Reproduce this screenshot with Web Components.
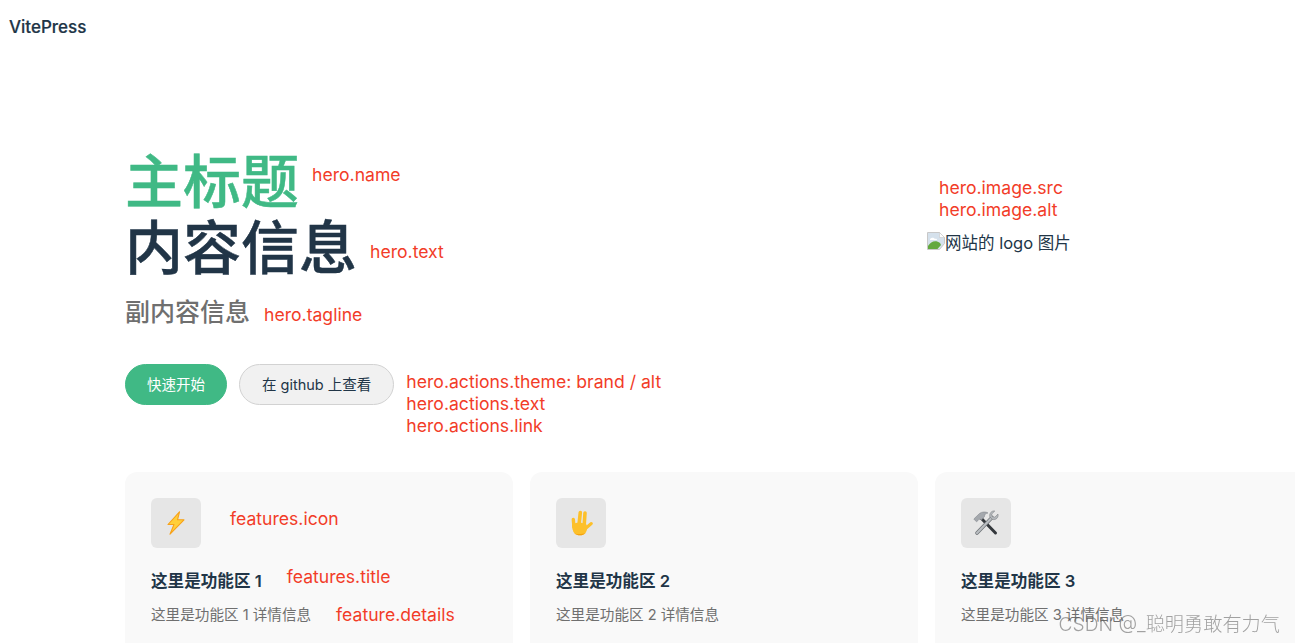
<!DOCTYPE html>
<html lang="zh">
<head>
<meta charset="utf-8">
<title>VitePress</title>
<style>
  html, body { margin: 0; height: 100%; overflow: hidden; background: #fff; }
  body {
    font-family: Inter, "Noto Sans CJK SC", sans-serif;
    color: #213547;
  }
</style>
</head>
<body>
<vp-nav>VitePress</vp-nav>
<vp-hero>
  <vp-title-row slot="name" tone="brand">主标题<vp-note slot="note">hero.name</vp-note></vp-title-row>
  <vp-title-row slot="text" tone="dark">内容信息<vp-note slot="note">hero.text</vp-note></vp-title-row>
  <span slot="tagline">副内容信息</span>
  <vp-note slot="tagline-note">hero.tagline</vp-note>
  <vp-button theme="brand" slot="actions">快速开始</vp-button>
  <vp-button theme="alt" slot="actions">在 github 上查看</vp-button>
  <vp-note slot="action-notes">hero.actions.theme: brand / alt</vp-note>
  <vp-note slot="action-notes">hero.actions.text</vp-note>
  <vp-note slot="action-notes">hero.actions.link</vp-note>
  <vp-note slot="image-notes">hero.image.src</vp-note>
  <vp-note slot="image-notes">hero.image.alt</vp-note>
  <vp-broken-image slot="image">网站的 logo 图片</vp-broken-image>
</vp-hero>
<vp-features>
  <vp-feature>
    <svg slot="icon" width="18" height="24" viewBox="0 0 18 24">
      <path d="M12.500.8 1 13.500h6L3 23.200 17 8.800h-6.500z" fill="#ffcf3a" stroke="#f7a11a" stroke-width="1.100" stroke-linejoin="round"/>
    </svg>
    <vp-note slot="icon-note">features.icon</vp-note>
    <span slot="title">这里是功能区 1</span>
    <vp-note slot="title-note">features.title</vp-note>
    <span slot="details">这里是功能区 1 详情信息</span>
    <vp-note slot="details-note">feature.details</vp-note>
  </vp-feature>
  <vp-feature>
    <svg slot="icon" width="24" height="26" viewBox="0 0 24 26">
      <g fill="none" stroke="#fdc02a" stroke-linecap="round">
        <path d="M5 17 4.300 9.500" stroke-width="3.400"/>
        <path d="M10 15 11.300 2.500" stroke-width="3.600"/>
        <path d="M15.200 15 16 3" stroke-width="3.600"/>
        <path d="M16.500 18.500 22.300 13.500" stroke-width="3"/>
      </g>
      <path d="M3 14.500C6 12 14 12 17.500 14.500 18.500 17 18.500 20 16.500 23 14 26 8.500 26 5.500 23.500 3.800 21.500 3 18 3 14.500Z" fill="#fdc02a"/>
      <path d="M5.500 23.500C8.500 26 14 26 16.500 23 14 24 9 24.500 5.500 23.500Z" fill="#f5a20f"/>
    </svg>
    <span slot="title">这里是功能区 2</span>
    <span slot="details">这里是功能区 2 详情信息</span>
  </vp-feature>
  <vp-feature>
    <svg slot="icon" width="26" height="26" viewBox="0 0 26 26">
      <path d="M7.500 7.500 22.500 23" stroke="#34383c" stroke-width="3" stroke-linecap="round"/>
      <path d="M.8 9 6.500 3.500C9 1.500 13 1.500 15 3 12.500 3.300 11.500 4.500 11.500 6.500L8.500 10C7.200 9 6 9 5 10.500L3.500 11.800Z" fill="#a4a8ad" stroke="#7b7f84" stroke-width=".5"/>
      <path d="M19 7.500 4 23" stroke="#6d7175" stroke-width="3.600" stroke-linecap="round"/>
      <path d="M19 7.500 4 23" stroke="#b9bdc1" stroke-width="2.200" stroke-linecap="round"/>
      <path d="M25 4 21.800 7.200 19.300 6.600 18.700 4.100 21.800 1C19 .4 16 3 16.800 6.800L19.500 9.500C23 10.300 25.800 7.500 25 4Z" fill="#b3b7bb" stroke="#74787c" stroke-width=".5"/>
    </svg>
    <span slot="title">这里是功能区 3</span>
    <span slot="details">这里是功能区 3 详情信息</span>
  </vp-feature>
</vp-features>
<vp-watermark>CSDN @_聪明勇敢有力气</vp-watermark>

<script>
class VpNav extends HTMLElement {
  constructor() {
    super();
    this.attachShadow({ mode: "open" });
    this.shadowRoot.innerHTML = `
      <style>
        :host {
          display: flex;
          align-items: center;
          height: 53px;
          padding-left: 9px;
          font-size: 17px;
          font-weight: 500;
          -webkit-text-stroke: 0.2px currentColor;
          color: #213547;
        }
      </style>
      <slot></slot>`;
  }
}

class VpNote extends HTMLElement {
  constructor() {
    super();
    this.attachShadow({ mode: "open" });
    this.shadowRoot.innerHTML = `
      <style>
        :host {
          display: block;
          font-size: 17.600px;
          font-weight: 400;
          line-height: 22px;
          color: #f23c28;
          white-space: nowrap;
          -webkit-text-stroke: 0;
        }
      </style>
      <slot></slot>`;
  }
}

class VpTitleRow extends HTMLElement {
  constructor() {
    super();
    this.attachShadow({ mode: "open" });
    const brand = this.getAttribute("tone") === "brand";
    this.shadowRoot.innerHTML = `
      <style>
        :host {
          display: flex;
          align-items: center;
          height: ${brand ? "65px" : "67px"};
          font-size: 58px;
          font-weight: 500;
          -webkit-text-stroke: 0.5px currentColor;
          line-height: ${brand ? "65px" : "67px"};
          color: ${brand ? "#40b985" : "#213547"};
        }
        .note {
          margin-left: 13px;
          padding-bottom: ${brand ? "16px" : "0"};
          padding-top: ${brand ? "0" : "6px"};
        }
      </style>
      <slot></slot>
      <div class="note"><slot name="note"></slot></div>`;
  }
}

class VpButton extends HTMLElement {
  constructor() {
    super();
    this.attachShadow({ mode: "open" });
    const brand = this.getAttribute("theme") === "brand";
    this.shadowRoot.innerHTML = `
      <style>
        :host {
          display: inline-flex;
          align-items: center;
          box-sizing: border-box;
          height: 41px;
          padding: 0 ${brand ? "21px" : "22px"} 2px;
          border-radius: 21px;
          border: 1px solid ${brand ? "#40b985" : "#d2d2d2"};
          background: ${brand ? "#40b985" : "#f1f1f1"};
          color: ${brand ? "#fff" : "#213547"};
          font-size: 14.500px;
          font-weight: 400;
          white-space: nowrap;
        }
      </style>
      <slot></slot>`;
  }
}

class VpBrokenImage extends HTMLElement {
  constructor() {
    super();
    this.attachShadow({ mode: "open" });
    this.shadowRoot.innerHTML = `
      <style>
        :host {
          display: flex;
          align-items: center;
          margin-top: 9px;
          margin-left: -12px;
          height: 24px;
          font-size: 16.500px;
          color: #213547;
          white-space: nowrap;
        }
        svg { flex: none; margin-bottom: 3px; }
      </style>
      <svg width="18" height="18" viewBox="0 0 18 18">
        <path d="M.5.5h12l5 5v6l-5 6H.500z" fill="#d5e1ec" stroke="#c8c8c8"/>
        <path d="M12.500.5v5h5z" fill="#fff" stroke="#c8c8c8" stroke-width=".6"/>
        <path d="M3 7c2-2 4-1 5 0 1-.5 2 0 2 1H3z" fill="#fff"/>
        <path d="M1 17v-3C4 9 9 8 13 11l1 2-3.500 4z" fill="#62a83e"/>
      </svg>
      <slot></slot>`;
  }
}

class VpHero extends HTMLElement {
  constructor() {
    super();
    this.attachShadow({ mode: "open" });
    this.shadowRoot.innerHTML = `
      <style>
        :host {
          display: flex;
          box-sizing: border-box;
          height: 419px;
          padding: 97px 0 0 125px;
        }
        .main { width: 795px; flex: none; }
        .tagline-row {
          display: flex;
          align-items: center;
          gap: 14px;
          margin-top: 10px;
          height: 36px;
          font-size: 25px;
          font-weight: 500;
          color: #6f6f6f;
        }
        .tagline-note { padding-top: 9px; }
        .actions-row {
          display: flex;
          align-items: flex-start;
          margin-top: 36px;
        }
        .actions { display: flex; gap: 12px; }
        .action-notes { margin: 7px 0 0 12px; }
        .side { padding: 27px 0 0 19px; }
      </style>
      <div class="main">
        <slot name="name"></slot>
        <slot name="text"></slot>
        <div class="tagline-row">
          <slot name="tagline"></slot>
          <div class="tagline-note"><slot name="tagline-note"></slot></div>
        </div>
        <div class="actions-row">
          <div class="actions"><slot name="actions"></slot></div>
          <div class="action-notes"><slot name="action-notes"></slot></div>
        </div>
      </div>
      <div class="side">
        <slot name="image-notes"></slot>
        <slot name="image"></slot>
      </div>`;
  }
}

class VpFeatures extends HTMLElement {
  constructor() {
    super();
    this.attachShadow({ mode: "open" });
    this.shadowRoot.innerHTML = `
      <style>
        :host {
          display: flex;
          gap: 17px;
          height: 171px;
          padding-left: 125px;
          overflow: hidden;
        }
      </style>
      <slot></slot>`;
  }
}

class VpFeature extends HTMLElement {
  constructor() {
    super();
    this.attachShadow({ mode: "open" });
    this.shadowRoot.innerHTML = `
      <style>
        :host {
          display: block;
          flex: none;
          box-sizing: border-box;
          width: 388px;
          padding: 26px;
          border-radius: 12px 12px 0 0;
          background: #f9f9f9;
        }
        .row { display: flex; align-items: center; }
        .icon {
          display: flex;
          align-items: center;
          justify-content: center;
          width: 50px;
          height: 50px;
          border-radius: 6px;
          background: #e6e6e6;
        }
        .icon-note { margin: 0 0 8px 29px; }
        .title {
          margin-top: 19px;
          height: 26px;
          font-size: 16.600px;
          font-weight: 600;
          color: #213547;
        }
        .title-note { margin: 0 0 6px 25px; }
        .details {
          margin-top: 8px;
          height: 24px;
          font-size: 14.600px;
          font-weight: 400;
          color: #6f6f6f;
        }
        .details-note { margin-left: 25px; padding-top: 4px; }
      </style>
      <div class="row">
        <div class="icon"><slot name="icon"></slot></div>
        <div class="icon-note"><slot name="icon-note"></slot></div>
      </div>
      <div class="row title">
        <slot name="title"></slot>
        <div class="title-note"><slot name="title-note"></slot></div>
      </div>
      <div class="row details">
        <slot name="details"></slot>
        <div class="details-note"><slot name="details-note"></slot></div>
      </div>`;
  }
}

// the CSDN mark sits over the page, so this one is pinned
class VpWatermark extends HTMLElement {
  constructor() {
    super();
    this.attachShadow({ mode: "open" });
    this.shadowRoot.innerHTML = `
      <style>
        :host {
          position: fixed;
          right: 15px;
          bottom: 6px;
          font-size: 19.200px;
          font-weight: 300;
          line-height: 26px;
          color: rgba(90, 90, 90, 0.55);
          white-space: nowrap;
        }
      </style>
      <slot></slot>`;
  }
}

customElements.define("vp-nav", VpNav);
customElements.define("vp-note", VpNote);
customElements.define("vp-title-row", VpTitleRow);
customElements.define("vp-button", VpButton);
customElements.define("vp-broken-image", VpBrokenImage);
customElements.define("vp-hero", VpHero);
customElements.define("vp-features", VpFeatures);
customElements.define("vp-feature", VpFeature);
customElements.define("vp-watermark", VpWatermark);
</script>
</body>
</html>
